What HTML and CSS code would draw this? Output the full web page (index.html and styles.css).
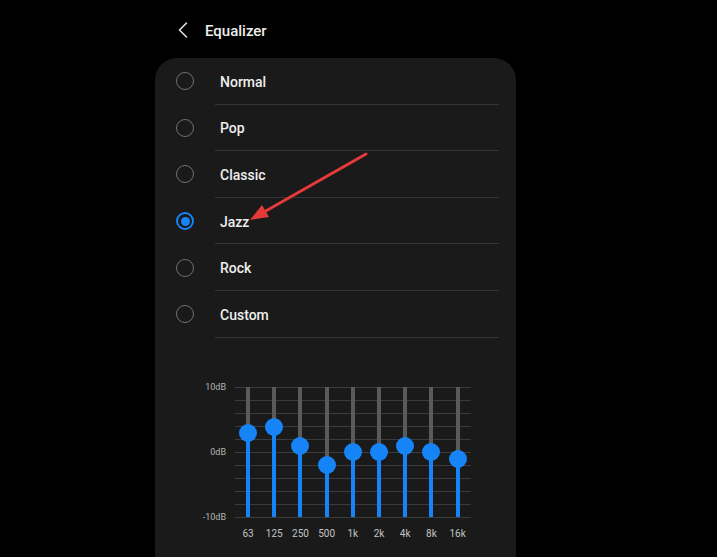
FILE: index.html
```html
<!DOCTYPE html>
<html lang="en">
<head>
    <meta charset="UTF-8">
    <meta name="viewport" content="width=device-width, initial-scale=1.0">
    <title>Equalizer</title>
    <link rel="stylesheet" href="styles.css">
</head>
<body>
    <div class="screen">
        <div class="topbar">
            <svg class="back" width="10" height="16" viewBox="0 0 10 16">
                <polyline points="8.5,1 1.5,8 8.5,15" fill="none" stroke="#e0e0e0" stroke-width="1.6" stroke-linecap="round" stroke-linejoin="round"/>
            </svg>
            <span class="title">Equalizer</span>
        </div>

        <div class="card">
            <div class="option"><span class="radio"></span><span class="label">Normal</span></div>
            <div class="option"><span class="radio"></span><span class="label">Pop</span></div>
            <div class="option"><span class="radio"></span><span class="label">Classic</span></div>
            <div class="option"><span class="radio checked"></span><span class="label">Jazz</span></div>
            <div class="option"><span class="radio"></span><span class="label">Rock</span></div>
            <div class="option"><span class="radio"></span><span class="label">Custom</span></div>

            <div class="eq">
                <div class="scale">
                    <span>10dB</span>
                    <span>0dB</span>
                    <span>-10dB</span>
                </div>
                <div class="bands">
                    <div class="band"><div class="track"><div class="fill" style="height:84px"><span class="thumb"></span></div></div><span class="freq">63</span></div>
                    <div class="band"><div class="track"><div class="fill" style="height:90px"><span class="thumb"></span></div></div><span class="freq">125</span></div>
                    <div class="band"><div class="track"><div class="fill" style="height:71px"><span class="thumb"></span></div></div><span class="freq">250</span></div>
                    <div class="band"><div class="track"><div class="fill" style="height:51.5px"><span class="thumb"></span></div></div><span class="freq">500</span></div>
                    <div class="band"><div class="track"><div class="fill" style="height:64.5px"><span class="thumb"></span></div></div><span class="freq">1k</span></div>
                    <div class="band"><div class="track"><div class="fill" style="height:64.5px"><span class="thumb"></span></div></div><span class="freq">2k</span></div>
                    <div class="band"><div class="track"><div class="fill" style="height:71px"><span class="thumb"></span></div></div><span class="freq">4k</span></div>
                    <div class="band"><div class="track"><div class="fill" style="height:64.5px"><span class="thumb"></span></div></div><span class="freq">8k</span></div>
                    <div class="band"><div class="track"><div class="fill" style="height:58px"><span class="thumb"></span></div></div><span class="freq">16k</span></div>
                </div>
            </div>
        </div>
    </div>

    <!-- annotation arrow drawn over the screenshot -->
    <svg class="arrow" width="717" height="557" viewBox="0 0 717 557">
        <line x1="366" y1="154" x2="264" y2="212" stroke="#e53a3a" stroke-width="3" stroke-linecap="round"/>
        <polygon points="250,220 269,217 262,205" fill="#e53a3a"/>
    </svg>
</body>
</html>
```

FILE: styles.css
```css
body {
    margin: 0;
    height: 557px;
    overflow: hidden;
    background-color: #000;
    color: #fff;
    font-family: Roboto, "Liberation Sans", sans-serif;
    position: relative;
}
.screen {
    width: 361px;
    margin-left: 155px;
}
.topbar {
    height: 58px;
    display: flex;
    align-items: center;
    padding-left: 23px;
    padding-top: 2px;
    box-sizing: border-box;
}
.back {
    display: block;
}
.title {
    margin-left: 17px;
    padding-top: 1px;
    font-size: 15px;
    font-weight: 500;
    color: #ededed;
}
.card {
    background-color: #1a1a1a;
    border-radius: 22px 22px 0 0;
    padding: 0 17px 0 0;
    height: 520px;
}
.option {
    display: flex;
    align-items: center;
    height: 46.6px;
}
.radio {
    width: 18px;
    height: 18px;
    box-sizing: border-box;
    border: 1.5px solid #707070;
    border-radius: 50%;
    margin: 0 21px;
    flex-shrink: 0;
    display: flex;
    align-items: center;
    justify-content: center;
}
.radio.checked {
    border: 2px solid #1683f7;
}
.radio.checked::after {
    content: "";
    width: 9px;
    height: 9px;
    border-radius: 50%;
    background-color: #1683f7;
}
.label {
    flex: 1;
    height: 100%;
    display: flex;
    align-items: center;
    padding: 2px 0 0 5px;
    border-bottom: 1px solid #353535;
    box-sizing: border-box;
    font-size: 14px;
    font-weight: 500;
    color: #eeeeee;
}
.eq {
    display: flex;
    margin-top: 49px;
}
.scale {
    width: 80px;
    height: 142px;
    margin-top: -6px;
    padding-right: 9px;
    box-sizing: border-box;
    display: flex;
    flex-direction: column;
    justify-content: space-between;
    align-items: flex-end;
    font-size: 9px;
    line-height: 12px;
    color: #b5b5b5;
}
.bands {
    display: flex;
    width: 236px;
    height: 131px;
    background: repeating-linear-gradient(to bottom, #3b3b3b 0 1px, transparent 1px 13px);
}
.band {
    width: 26.2px;
    display: flex;
    flex-direction: column;
    align-items: center;
}
.track {
    width: 4px;
    height: 130px;
    background-color: #5a5a5a;
    position: relative;
    flex-shrink: 0;
}
.fill {
    position: absolute;
    left: 0;
    right: 0;
    bottom: 0;
    background-color: #1683f7;
}
.thumb {
    position: absolute;
    top: -9px;
    left: -7px;
    width: 18px;
    height: 18px;
    border-radius: 50%;
    background-color: #1683f7;
}
.freq {
    margin-top: 11px;
    font-size: 10px;
    line-height: 12px;
    color: #c4c4c4;
}
.arrow {
    position: absolute;
    left: 0;
    top: 0;
    pointer-events: none;
}
```
